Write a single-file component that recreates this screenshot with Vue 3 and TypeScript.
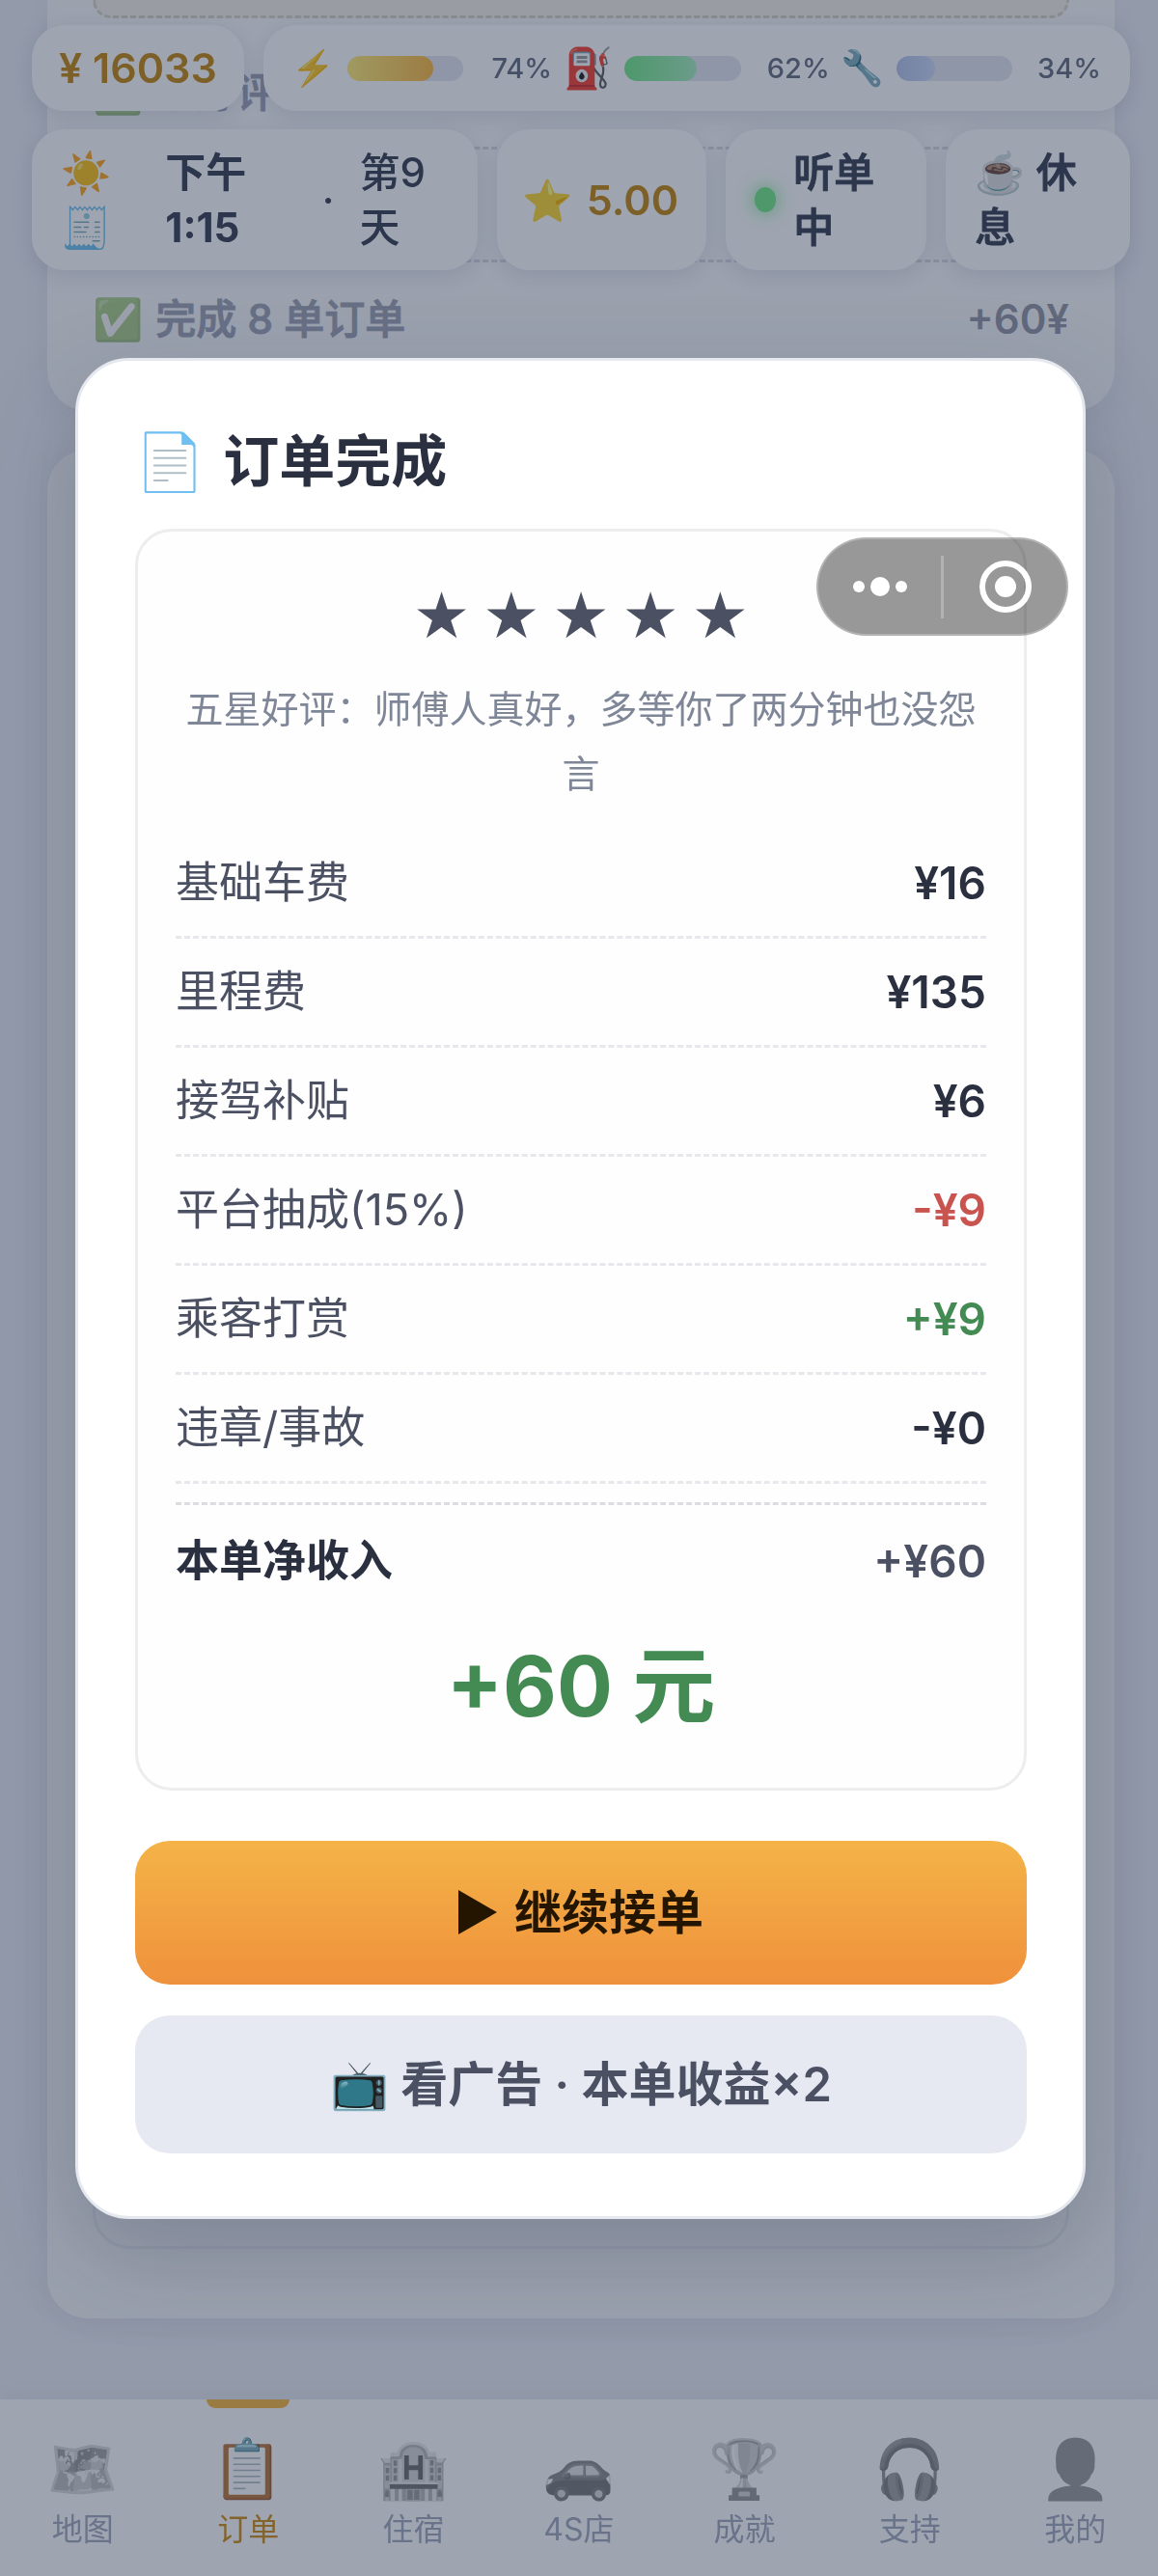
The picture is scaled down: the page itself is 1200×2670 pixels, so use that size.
<script setup lang="ts">
interface Gauge { icon: string; label: string; value: number; from: string; to: string; large?: boolean }
interface Task { name: string; reward: string }
interface Line { label: string; value: string; tone?: string }
interface Tab { icon: string; label: string; active?: boolean }

const gauges: Gauge[] = [
  { icon: '⚡', label: '体力', value: 74, from: '#ffec79', to: '#fab843' },
  { icon: '⛽', label: '油量', value: 62, from: '#74e88a', to: '#a8efbf', large: true },
  { icon: '🔧', label: '车况', value: 34, from: '#b5c5ec', to: '#ccd8f8' }
]
const tasks: Task[] = [
  { name: '获好评', reward: '' },
  { name: '', reward: '' },
  { name: '完成 8 单订单', reward: '+60¥' }
]
const lines: Line[] = [
  { label: '基础车费', value: '¥16' },
  { label: '里程费', value: '¥135' },
  { label: '接驾补贴', value: '¥6' },
  { label: '平台抽成(15%)', value: '-¥9', tone: 'minus' },
  { label: '乘客打赏', value: '+¥9', tone: 'plus' },
  { label: '违章/事故', value: '-¥0' }
]
const tabs: Tab[] = [
  { icon: '🗺️', label: '地图' },
  { icon: '📋', label: '订单', active: true },
  { icon: '🏨', label: '住宿' },
  { icon: '🚗', label: '4S店' },
  { icon: '🏆', label: '成就' },
  { icon: '🎧', label: '支持' },
  { icon: '👤', label: '我的' }
]
const rating = 5
</script>

<template>
  <div class="page">
    <main class="feed">
      <section class="card tasks">
        <div class="tip"></div>
        <ul>
          <li v-for="(t, i) in tasks" :key="i">
            <template v-if="t.name">
              <span class="check">✅</span>
              <span class="name">{{ t.name }}</span>
              <span class="reward">{{ t.reward }}</span>
            </template>
          </li>
        </ul>
      </section>
      <section class="card board"><div class="board-inner"></div></section>
    </main>

    <header class="status">
      <div class="row">
        <div class="pill money">¥ 16033</div>
        <div class="pill gauges">
          <div v-for="g in gauges" :key="g.label" class="gauge" :title="g.label">
            <span class="gauge-icon" :class="{ large: g.large }">{{ g.icon }}</span>
            <span class="bar"><span class="fill" :style="{ width: g.value + '%', background: `linear-gradient(90deg, ${g.from}, ${g.to})` }"></span></span>
            <span class="pct">{{ g.value }}%</span>
          </div>
        </div>
      </div>
      <div class="row details">
        <div class="pill clock">
          <span>☀️<br>🧾</span>
          <strong>下午<br>1:15</strong>
          <span>·</span>
          <span class="day">第9<br>天</span>
        </div>
        <div class="pill score"><span>⭐</span><b>5.00</b></div>
        <button class="pill online" type="button"><i class="dot"></i><span>听单<br>中</span></button>
        <button class="pill rest" type="button"><span>☕ 休<br>息</span></button>
      </div>
    </header>

    <nav class="tabs">
      <a v-for="t in tabs" :key="t.label" href="#" :class="{ active: t.active }">
        <span class="tab-icon">{{ t.icon }}</span>
        <span class="tab-label">{{ t.label }}</span>
      </a>
    </nav>

    <div class="mask">
      <div class="modal" role="dialog" aria-labelledby="done-title">
        <h2 id="done-title"><span>📄</span><span>订单完成</span></h2>
        <div class="receipt">
          <div class="stars"><span v-for="s in rating" :key="s">★</span></div>
          <p class="review">五星好评：师傅人真好，多等你了两分钟也没怨言</p>
          <dl>
            <div v-for="l in lines" :key="l.label" class="line">
              <dt>{{ l.label }}</dt>
              <dd :class="l.tone">{{ l.value }}</dd>
            </div>
            <div class="total">
              <dt>本单净收入</dt>
              <dd>+¥60</dd>
            </div>
          </dl>
          <div class="big">+60 元</div>
        </div>
        <button class="action primary" type="button">
          <svg class="play" viewBox="0 0 40 46" aria-hidden="true"><path d="M0 0 40 23 0 46Z" /></svg>
          <span>继续接单</span>
        </button>
        <button class="action secondary" type="button">📺 看广告 · 本单收益×2</button>
      </div>
    </div>

    <div class="capsule">
      <button type="button" aria-label="更多">
        <svg width="56" height="22" viewBox="0 0 56 22"><circle cx="6" cy="11" r="6" /><circle cx="28" cy="11" r="10" /><circle cx="50" cy="11" r="6" /></svg>
      </button>
      <i class="split"></i>
      <button type="button" aria-label="关闭">
        <svg width="56" height="56" viewBox="0 0 56 56"><circle cx="28" cy="28" r="24" class="ring" /><circle cx="28" cy="28" r="11" /></svg>
      </button>
    </div>
  </div>
</template>

<style>
body {
  background: #ebeef6;
}
</style>

<style scoped>
.page {
  font-family: Inter, "Noto Sans CJK SC", "Noto Color Emoji", sans-serif;
  font-size: 42px;
  line-height: 57px;
  color: #394154;
}
.page *,
.page *::before {
  box-sizing: border-box;
}
button {
  font: inherit;
  color: inherit;
  border: 0;
  margin: 0;
  padding: 0;
  background: none;
  text-align: left;
}

/* Scrolling feed */
.feed {
  min-height: 100vh;
  padding: 0 45px 267px 49px;
  display: flex;
  flex-direction: column;
  gap: 40px;
}
.card {
  background: #f9fafc;
  border-radius: 42px;
  padding: 0 47px;
  box-shadow: 0 8px 32px rgba(60, 70, 110, 0.08);
}
.tasks {
  border-radius: 0 0 42px 42px;
  padding-bottom: 37px;
}
.tip {
  height: 19px;
  background: #f5f1e9;
  border: 3px dashed #d9d4c8;
  border-top: 0;
  border-radius: 0 0 24px 24px;
}
.tasks ul {
  list-style: none;
  margin: 19px 0 0;
  padding: 0;
}
.tasks li {
  display: flex;
  align-items: center;
  gap: 13px;
  height: 117px;
  border-bottom: 3px dashed #d8dae1;
}
.tasks li:last-child {
  border-bottom: 0;
}
.check {
  opacity: 0.6;
}
.name {
  flex: 1;
  font-weight: 500;
  color: #a0a4b7;
  -webkit-text-stroke: 1px #a0a4b7;
}
.reward {
  font-weight: 600;
  color: #9698a8;
}
.board {
  flex: 1;
  display: flex;
  padding: 47px 47px 72px;
}
.board-inner {
  flex: 1;
  border: 3px solid #eceef4;
  border-radius: 38px;
}

/* Status header */
.status {
  position: fixed;
  top: 0;
  left: 0;
  right: 0;
  padding: 26px 29px 0 33px;
  display: flex;
  flex-direction: column;
  gap: 19px;
}
.row {
  display: flex;
  gap: 20px;
}
.details {
  display: grid;
  grid-template-columns: 462fr 218fr 208fr 191fr;
}
.pill {
  display: flex;
  align-items: center;
  background: #fefeff;
  border-radius: 34px;
  padding: 16px 30px;
  font-weight: 500;
  box-shadow: 0 6px 24px rgba(50, 60, 110, 0.14);
}
.money,
.score b {
  font-size: 43px;
  font-weight: 600;
  color: #c48914;
}
.money {
  padding: 16px 28px;
  white-space: nowrap;
}
.gauges {
  flex: 1;
  gap: 12px;
}
.gauge {
  flex: 1 1 auto;
  display: flex;
  align-items: center;
  gap: 12px;
}
.gauge-icon {
  font-size: 36px;
}
.gauge-icon.large {
  font-size: 41px;
}
.bar {
  flex: 1;
  height: 26px;
  border-radius: 13px;
  background: #e4e5f1;
  overflow: hidden;
}
.fill {
  display: block;
  height: 100%;
  border-radius: 13px;
}
.pct {
  width: 80px;
  text-align: right;
  font-size: 29px;
  color: #676d80;
}
.clock {
  gap: 26px;
}
.clock strong {
  flex: 1;
  padding-left: 30px;
  font-weight: 700;
}
.day {
  width: 92px;
}
.score {
  gap: 14px;
  padding: 16px 27px;
}
.online {
  gap: 18px;
}
.online,
.rest {
  white-space: nowrap;
  -webkit-text-stroke: 1px #394154;
}
.dot {
  width: 22px;
  height: 26px;
  border-radius: 50%;
  background: #74e88a;
  box-shadow: 0 0 20px #74e88a;
}

/* Bottom tabs */
.tabs {
  position: fixed;
  bottom: 0;
  left: 0;
  right: 0;
  display: flex;
  background: #fefeff;
  box-shadow: 0 -4px 24px rgba(50, 60, 110, 0.06);
}
.tabs a {
  position: relative;
  flex: 1;
  display: flex;
  flex-direction: column;
  align-items: center;
  gap: 2px;
  padding: 31px 0 26px;
  text-decoration: none;
  color: #a3a9bd;
}
.tab-icon {
  font-size: 60px;
  line-height: 80px;
  filter: grayscale(1);
  opacity: 0.65;
}
.tab-label {
  font-size: 32px;
  line-height: 44px;
}
.tabs .active {
  color: #cf8f1c;
}
.active .tab-icon {
  filter: none;
  opacity: 1;
}
.active::before {
  content: "";
  position: absolute;
  top: 0;
  left: 25%;
  width: 50%;
  height: 9px;
  border-radius: 0 0 9px 9px;
  background: #f7b842;
}

/* Settlement dialog */
.mask {
  position: fixed;
  inset: 0;
  display: flex;
  align-items: center;
  padding: 0 75px 0 78px;
  background: rgba(26, 41, 67, 0.42);
}
.modal {
  flex: 1;
  padding: 62px 58px 65px 59px;
  background: #fff;
  border: 3px solid #e5e8ee;
  border-radius: 56px;
  box-shadow: 0 36px 100px rgba(25, 35, 65, 0.24);
}
h2 {
  display: flex;
  gap: 19px;
  margin: 0 0 28px;
  font-size: 58px;
  line-height: 84px;
  font-weight: 600;
  color: #2b3040;
}
.receipt {
  padding: 48px 39px 45px;
  background: #fefefe;
  border: 3px solid #ededee;
  border-radius: 38px;
  color: #4b5163;
}
.stars {
  display: flex;
  justify-content: center;
  gap: 13px;
  font-family: "DejaVu Sans", sans-serif;
  font-size: 66px;
  line-height: 80px;
}
.review {
  margin: 22px 0 25px;
  text-align: center;
  font-size: 39px;
  line-height: 67px;
  color: #7e8697;
}
dl,
dd {
  margin: 0;
}
.line,
.total {
  display: flex;
  justify-content: space-between;
  font-size: 45px;
}
.line {
  line-height: 110px;
  border-bottom: 3px dashed #e7e8eb;
}
dd {
  font-size: 46px;
  font-weight: 600;
}
.line dd {
  color: #2b3040;
}
.line .minus {
  color: #c9534f;
}
.line .plus {
  color: #438a53;
}
.total {
  margin-top: 19px;
  padding-top: 28px;
  line-height: 60px;
  border-top: 3px dashed #dcdde1;
}
.total dt {
  font-weight: 700;
  color: #2b3040;
}
.big {
  margin-top: 40px;
  text-align: center;
  font-size: 86px;
  line-height: 120px;
  font-weight: 700;
  color: #438a53;
}
.action {
  display: flex;
  align-items: center;
  justify-content: center;
  width: 100%;
  border-radius: 36px;
  font-size: 49px;
  line-height: 67px;
  font-weight: 600;
}
.primary {
  gap: 18px;
  margin-top: 52px;
  padding: 41px 0;
  color: #231500;
  background: linear-gradient(#f4b347, #ef913c);
}
.play {
  width: 40px;
  height: 46px;
  fill: currentColor;
}
.secondary {
  margin-top: 32px;
  padding: 38px 0;
  color: #4b5163;
  background: #e6e9f2;
}

/* Mini-program capsule */
.capsule {
  position: fixed;
  top: 557px;
  right: 93px;
  width: 261px;
  height: 102px;
  display: flex;
  align-items: center;
  border: 2px solid rgba(255, 255, 255, 0.25);
  border-radius: 51px;
  background: rgba(0, 0, 0, 0.4);
}
.capsule button {
  flex: 1;
  display: flex;
  justify-content: center;
}
.capsule svg {
  fill: #fff;
}
.capsule .ring {
  fill: none;
  stroke: #fff;
  stroke-width: 6;
}
.split {
  width: 3px;
  height: 65px;
  background: rgba(255, 255, 255, 0.25);
}
</style>
